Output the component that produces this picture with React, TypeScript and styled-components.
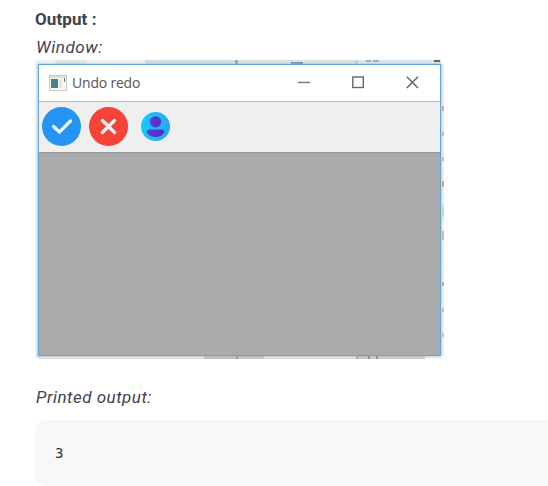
import React from 'react';
import styled, { createGlobalStyle } from 'styled-components';

const GlobalStyle = createGlobalStyle`
  * { box-sizing: border-box; }
  body { margin: 0; background: #fff; overflow: hidden; }
`;

const Article = styled.main`
  width: 548px;
  height: 486px;
  padding: 8px 0 0 35px;
  overflow: hidden;
  color: #40424e;
  font-family: Roboto, 'Liberation Sans', sans-serif;
`;

const Heading = styled.h2`
  margin: 0;
  height: 23px;
  font-size: 17px;
  line-height: 23px;
  font-weight: 700;
  letter-spacing: 0.1px;
`;

const Caption = styled.p<{ $gap: number; $tracking: number }>`
  margin: ${({ $gap }) => $gap}px 0 0 1px;
  height: 24px;
  font-size: 17px;
  line-height: 24px;
  font-style: italic;
  letter-spacing: ${({ $tracking }) => $tracking}px;
`;

/* The sliver of desktop that shows around the window */
const Desktop = styled.figure`
  margin: 1px 0 0;
  width: 409px;
  height: 300px;
  padding: 4px 3px 4px 3px;
  background:
    linear-gradient(#d0a8a0, #d0a8a0) 407px 46px / 2px 5px no-repeat,
    linear-gradient(#d8b4ac, #d8b4ac) 407px 72px / 2px 4px no-repeat,
    linear-gradient(#d4b8ae, #d4b8ae) 407px 97px / 2px 4px no-repeat,
    linear-gradient(#d0a898, #d0a898) 407px 121px / 2px 6px no-repeat,
    linear-gradient(#c8dcc0, #c8dcc0) 407px 145px / 2px 12px no-repeat,
    linear-gradient(#d4b8a6, #d4b8a6) 407px 171px / 2px 9px no-repeat,
    linear-gradient(#caaea6, #caaea6) 407px 222px / 2px 4px no-repeat,
    linear-gradient(#d4bcb5, #d4bcb5) 407px 248px / 2px 4px no-repeat,
    linear-gradient(#d4bcb5, #d4bcb5) 407px 273px / 2px 4px no-repeat,
    linear-gradient(#59636b, #59636b) 399px 0 / 6px 2px no-repeat,
    linear-gradient(#7d98a5, #7d98a5) 256px 2px / 12px 2px no-repeat,
    linear-gradient(#a3b0b7, #a3b0b7) 331px 0 / 5px 2px no-repeat,
    linear-gradient(#a3b0b7, #a3b0b7) 338px 0 / 6px 2px no-repeat,
    linear-gradient(90deg, #eef1f2 0 20px, #dfe4e6 20px 52px, #eef1f2 52px 110px, #d3dce1 110px 200px, #9da9af 200px 203px, #d9e1e5 203px 320px, #c4ced3 320px 323px, #d9e5ea 323px) 0 0 / 406px 4px no-repeat,
    linear-gradient(90deg, transparent 0 4px, #e5dfdc 4px 169px, #c5c1bf 169px 201px, #989898 201px 203px, #c8c5c3 203px 229px, #e3dddb 229px 321px, #aaa 321px 323px, #cac6c4 323px 333px, #8c8c8c 333px 335px, #d0ccca 335px 341px, #8c8c8c 341px 343px, #d0ccca 343px 390px, #eef3f6 390px) 0 296px / 406px 3px no-repeat,
    linear-gradient(90deg, #f5f7f8, #d2dce2) 0 0 / 4px 298px no-repeat,
    linear-gradient(90deg, #d5e5ef, #fbeee9) 405px 4px / 4px 292px no-repeat;
`;

const Window = styled.section`
  display: flex;
  flex-direction: column;
  width: 403px;
  height: 292px;
  border: 1px solid #65a5d4;
  background: #ababab;
  box-shadow: 0 0 2px #88b6d8;
`;

const TitleBar = styled.header`
  display: flex;
  align-items: center;
  height: 37px;
  flex: none;
  padding-left: 10px;
  background: #fff;
  border-bottom: 1px solid #b9b9b9;
`;

const Title = styled.span`
  margin-left: 5px;
  flex: 1;
  color: #555;
  font: 14px/20px 'Open Sans', 'Noto Sans', sans-serif;
  letter-spacing: -0.2px;
`;

const Controls = styled.div`
  display: flex;
  gap: 42px;
  margin: 0 21px 2px 0;
  svg { display: block; }
`;

const Toolbar = styled.nav`
  display: flex;
  align-items: center;
  gap: 8px;
  height: 51px;
  flex: none;
  padding: 0 0 2px 3px;
  background: #efefef;
  border-bottom: 1px solid #999;
`;

const Tool = styled.button<{ $size: number; $color: string; $indent?: number }>`
  display: block;
  width: ${({ $size }) => $size}px;
  height: ${({ $size }) => $size}px;
  margin: 0 0 0 ${({ $indent = 0 }) => $indent}px;
  padding: 0;
  border: 0;
  border-radius: 50%;
  overflow: hidden;
  background: ${({ $color }) => $color};
  svg { display: block; width: 100%; height: 100%; }
`;

const CodeBlock = styled.pre`
  margin: 11px 0 0;
  height: 66px;
  padding: 23px 20px;
  border-radius: 10px 0 0 10px;
  background: #f8f8f9;
  color: #333;
  font: 14px/20px 'DejaVu Sans Mono', 'Liberation Mono', monospace;
`;

const AppIcon = () => (
  <svg width="18" height="16" viewBox="0 0 18 16">
    <defs>
      <linearGradient id="pane" x2="0" y2="1">
        <stop stopColor="#477f9c" /><stop offset="1" stopColor="#458b68" />
      </linearGradient>
    </defs>
    <rect x=".5" y=".5" width="17" height="15" fill="#f7f7f4" stroke="#c8cac7" />
    <path d="M1 2h16" stroke="#dedfdd" strokeWidth="2" />
    <rect x="2" y="4" width="7" height="9" fill="url(#pane)" />
    <path d="M11.5 4v9" stroke="#dbded9" strokeWidth="2" />
    <path d="M15.5 3v4" stroke="#667c74" />
  </svg>
);

export default function App() {
  return (
    <>
      <GlobalStyle />
      <Article>
        <Heading>Output :</Heading>
        <Caption $gap={4} $tracking={0.55}>Window:</Caption>
        <Desktop>
          <Window>
            <TitleBar>
              <AppIcon />
              <Title>Undo redo</Title>
              <Controls>
                <svg width="12" height="13"><path d="M0 6.5h12" stroke="#777" strokeWidth="1.5" /></svg>
                <svg width="12" height="13"><rect x=".8" y="1" width="10.5" height="10.5" fill="none" stroke="#666" strokeWidth="1.4" /></svg>
                <svg width="13" height="13"><path d="M.8.8l11.2 11.2M12 .8L.8 12" stroke="#666" strokeWidth="1.5" /></svg>
              </Controls>
            </TitleBar>
            <Toolbar>
              <Tool $size={39} $color="#2494f3" aria-label="Confirm">
                <svg viewBox="0 0 39 39"><path d="M11.5 19.5l6 5.5L28.5 14" fill="none" stroke="#f0f8fd" strokeWidth="3.2" strokeLinecap="round" /></svg>
              </Tool>
              <Tool $size={39} $color="#f64338" aria-label="Cancel">
                <svg viewBox="0 0 39 39"><path d="M13.5 13.5L25.5 25.5M25.5 13.5L13.5 25.5" stroke="#fdeeee" strokeWidth="3.4" strokeLinecap="round" /></svg>
              </Tool>
              <Tool $size={29} $indent={5} $color="linear-gradient(90deg, #14cdfb, #2ba4f3)" aria-label="User">
                <svg viewBox="0 0 29 29">
                  <defs>
                    <linearGradient id="person"><stop stopColor="#6833e6" /><stop offset="1" stopColor="#4638b5" /></linearGradient>
                  </defs>
                  <circle cx="14.5" cy="9.8" r="5.6" fill="url(#person)" />
                  <path d="M5.5 20.5Q5.5 17.5 9 17.5H20Q23.5 17.5 23.5 20.5Q20 25 14.5 25T5.5 20.5Z" fill="url(#person)" />
                </svg>
              </Tool>
            </Toolbar>
          </Window>
        </Desktop>
        <Caption $gap={25} $tracking={0.5}>Printed output:</Caption>
        <CodeBlock>3</CodeBlock>
      </Article>
    </>
  );
}
